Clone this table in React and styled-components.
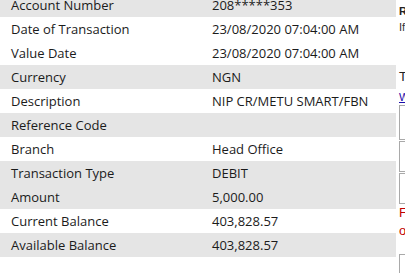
import React from "react";
import styled, { createGlobalStyle } from "styled-components";

const rows = [
	{ label: "Account Number", value: "208*****353", shade: true },
	{ label: "Date of Transaction", value: "23/08/2020 07:04:00 AM" },
	{ label: "Value Date", value: "23/08/2020 07:04:00 AM" },
	{ label: "Currency", value: "NGN", shade: true },
	{ label: "Description", value: "NIP CR/METU SMART/FBN" },
	{ label: "Reference Code", value: "", shade: true },
	{ label: "Branch", value: "Head Office" },
	{ label: "Transaction Type", value: "DEBIT", shade: true },
	{ label: "Amount", value: "5,000.00", shade: true },
	{ label: "Current Balance", value: "403,828.57" },
	{ label: "Available Balance", value: "403,828.57", shade: true },
];

function App() {
	return (
		<>
			<GlobalStyle />
			<Page>
				<Details>
					{rows.map((row) => (
						<Row key={row.label} $shade={row.shade}>
							<Label>{row.label}</Label>
							<Value>{row.value}</Value>
						</Row>
					))}
				</Details>
				<Side>
					<SideTitle>Remarks</SideTitle>
					<SideText>If you have any query</SideText>
					<SideHeading>Transaction</SideHeading>
					<SideLink href="#">What is this?</SideLink>
					<Box $h={33} />
					<Box $h={29} />
					<Box $h={29} />
					<Warn>Field required</Warn>
					<Warn>or contact</Warn>
					<Box $h={30} $gap={14} />
				</Side>
			</Page>
		</>
	);
}

const GlobalStyle = createGlobalStyle`
	body {
		margin: 0;
		background: #fff;
		overflow: hidden;
	}
`;

const Page = styled.div`
	display: flex;
	align-items: flex-start;
	gap: 3px;
	margin-top: -7px;
	width: 405px;
	overflow: hidden;
`;

const Details = styled.div`
	flex: 0 0 396px;
	font-family: "Open Sans", sans-serif;
	font-size: 13px;
	color: #1b1b1b;
`;

const Row = styled.div`
	display: grid;
	grid-template-columns: 200px 1fr;
	height: 24px;
	align-items: center;
	background: ${(p) => (p.$shade ? "#e5e5e5" : "#fff")};
`;

const Label = styled.div`
	padding-left: 11px;
	white-space: nowrap;
`;

const Value = styled.div`
	padding-left: 12px;
	white-space: nowrap;
`;

const Side = styled.div`
	flex: 0 0 200px;
	display: flex;
	flex-direction: column;
	padding-top: 11px;
	font-family: "Liberation Sans", Arial, sans-serif;
	white-space: nowrap;
`;

const SideTitle = styled.div`
	font-size: 11px;
	font-weight: bold;
	color: #222;
	line-height: 14px;
`;

const SideText = styled.div`
	font-size: 11px;
	color: #333;
	line-height: 18px;
`;

const SideHeading = styled.div`
	margin-top: 33px;
	font-size: 13px;
	color: #222;
	line-height: 16px;
`;

const SideLink = styled.a`
	margin-top: 5px;
	font-size: 11px;
	color: #1a0dab;
	line-height: 14px;
	text-decoration: underline;
`;

const Box = styled.div`
	height: ${(p) => p.$h}px;
	margin-top: ${(p) => p.$gap ?? 1}px;
	border: 1px solid #a9a9a9;
	background: #fff;
`;

const Warn = styled.div`
	font-size: 13px;
	color: #c00000;
	line-height: 18px;
`;

export default App;
